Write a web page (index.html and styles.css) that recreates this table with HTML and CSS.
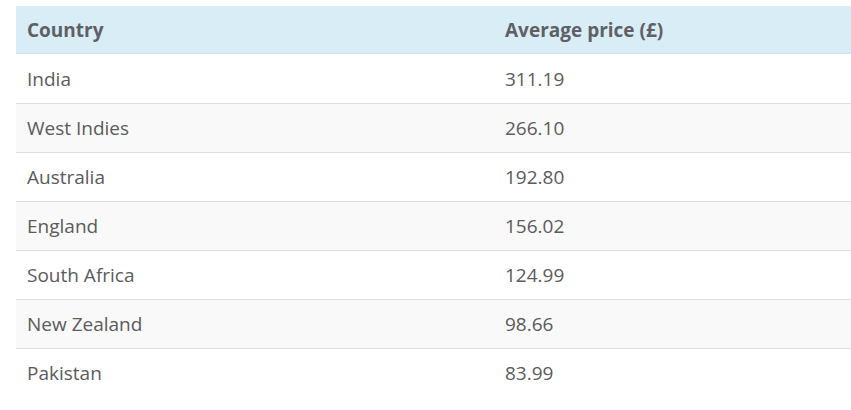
FILE: index.html
```html
<!DOCTYPE html>
<html lang="en">
<head>
<meta charset="utf-8">
<title>Average price by country</title>
<link rel="stylesheet" href="styles.css">
</head>
<body>
<table class="prices">
  <thead>
    <tr><th class="col-country">Country</th><th>Average price (£)</th></tr>
  </thead>
  <tbody>
    <tr><td>India</td><td>311.19</td></tr>
    <tr><td>West Indies</td><td>266.10</td></tr>
    <tr><td>Australia</td><td>192.80</td></tr>
    <tr><td>England</td><td>156.02</td></tr>
    <tr><td>South Africa</td><td>124.99</td></tr>
    <tr><td>New Zealand</td><td>98.66</td></tr>
    <tr><td>Pakistan</td><td>83.99</td></tr>
  </tbody>
</table>
</body>
</html>
```
FILE: styles.css
```css
html, body {
  margin: 0;
  padding: 0;
  background: #fff;
}
body {
  padding: 6px 0 0 16px;
  font-family: "Open Sans", "Noto Sans", sans-serif;
  color: #5b5b5b;
}
.prices {
  width: 836px;
  border-collapse: collapse;
  font-size: 19px;
}
.prices th,
.prices td {
  text-align: left;
  padding: 0 11px;
  vertical-align: middle;
  line-height: 24px;
}
.prices th {
  height: 46px;
  padding-top: 1px;
  background: #d9edf7;
  font-weight: 700;
  color: #5e6066;
  border-bottom: 1px solid #cfe3ed;
}
.prices td {
  height: 48px;
  border-top: 1px solid #dddddd;
}
.prices tbody tr:first-child td {
  border-top: none;
  height: 49px;
}
.prices tbody tr:nth-child(even) td {
  background: #f9f9f9;
}
.col-country {
  width: 456px;
}
```
